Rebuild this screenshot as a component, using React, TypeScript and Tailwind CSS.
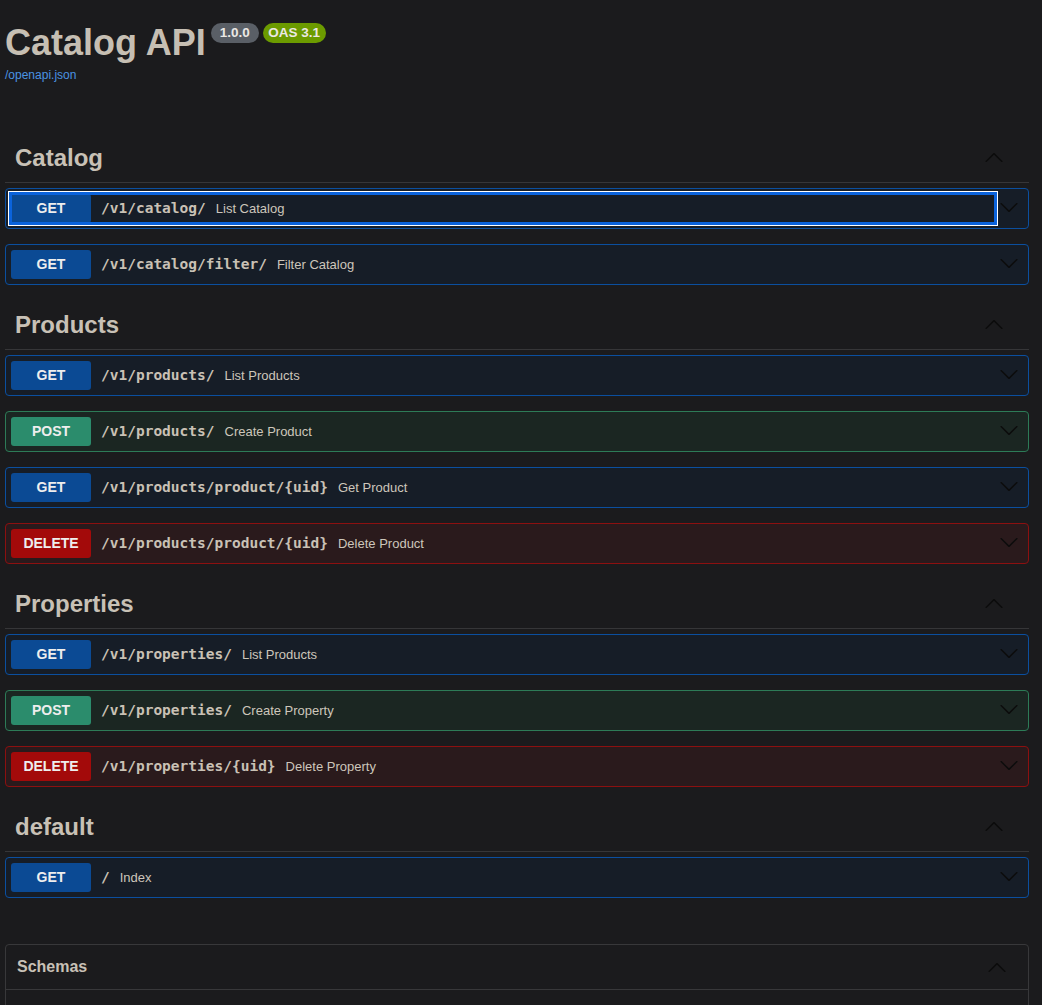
import React from "react";

type Method = "GET" | "POST" | "DELETE";

const methodStyle: Record<Method, { block: string; badge: string }> = {
  GET: { block: "border-[#0b4f9f] bg-[#161d27]", badge: "bg-[#0b4a94]" },
  POST: { block: "border-[#2d7b57] bg-[#1b2622]", badge: "bg-[#2b8c6c]" },
  DELETE: { block: "border-[#8c1010] bg-[#2a1a1c]", badge: "bg-[#a30a0a]" },
};

const sections: { name: string; ops: { m: Method; p: string; d: string; focus?: boolean }[] }[] = [
  {
    name: "Catalog",
    ops: [
      { m: "GET", p: "/v1/catalog/", d: "List Catalog", focus: true },
      { m: "GET", p: "/v1/catalog/filter/", d: "Filter Catalog" },
    ],
  },
  {
    name: "Products",
    ops: [
      { m: "GET", p: "/v1/products/", d: "List Products" },
      { m: "POST", p: "/v1/products/", d: "Create Product" },
      { m: "GET", p: "/v1/products/product/{uid}", d: "Get Product" },
      { m: "DELETE", p: "/v1/products/product/{uid}", d: "Delete Product" },
    ],
  },
  {
    name: "Properties",
    ops: [
      { m: "GET", p: "/v1/properties/", d: "List Products" },
      { m: "POST", p: "/v1/properties/", d: "Create Property" },
      { m: "DELETE", p: "/v1/properties/{uid}", d: "Delete Property" },
    ],
  },
  {
    name: "default",
    ops: [{ m: "GET", p: "/", d: "Index" }],
  },
];

function ArrowDown() {
  return (
    <svg width="20" height="20" viewBox="0 0 20 20" fill="#0c0c0c">
      <path d="M17.418 6.109c.272-.268.709-.268.979 0s.271.701 0 .969l-7.908 7.83c-.27.268-.707.268-.979 0l-7.908-7.83c-.27-.268-.27-.701 0-.969.271-.268.709-.268.979 0L10 13.25l7.418-7.141z" />
    </svg>
  );
}

function ArrowUp() {
  return (
    <svg width="20" height="20" viewBox="0 0 20 20" fill="#0c0c0c">
      <path d="M17.418 14.908c.272.268.709.268.979 0s.271-.701 0-.969l-7.908-7.83c-.27-.268-.707-.268-.979 0l-7.908 7.83c-.27.268-.27.701 0 .969.271.268.709.268.979 0L10 7.767l7.418 7.141z" />
    </svg>
  );
}

function Opblock({ m, p, d, focus }: { m: Method; p: string; d: string; focus?: boolean }) {
  const s = methodStyle[m];
  return (
    <div className={`relative mb-[15px] flex h-[41px] items-center rounded-[4px] border px-[5px] ${s.block}`}>
      <div className="flex flex-1 items-center">
        <span
          className={`flex h-[29px] w-[80px] items-center justify-center rounded-[3px] text-[14px] font-bold text-[#eeeeee] ${s.badge}`}
        >
          {m}
        </span>
        <span className="px-[10px] font-['DejaVu_Sans_Mono',monospace] text-[14.5px] font-bold text-[#c9c1b5]">
          {p}
        </span>
        <span className="text-[13px] text-[#cdc6bb]">{d}</span>
      </div>
      <span className="mr-[4px] mt-[-4px] flex">
        <ArrowDown />
      </span>
      {focus && (
        <span className="pointer-events-none absolute bottom-[3px] left-[3px] right-[31px] top-[3px] border-[3px] border-[#0b63dc] shadow-[0_0_0_1px_#ffffff]" />
      )}
    </div>
  );
}

export default function App() {
  return (
    <div className="min-h-screen bg-[#1b1b1d] pl-[5px] pr-[13px] font-['Liberation_Sans',Arial,sans-serif] text-[#c8c1b6]">
      <div className="h-[133px] pt-[22px]">
        <div className="flex items-start">
          <h1 className="text-[36px] font-bold leading-[41px] text-[#c6bfb3]">Catalog API</h1>
          <span className="ml-[5px] mt-[1px] flex h-[20px] w-[48px] items-center justify-center rounded-full bg-[#5a5f66] text-[13.5px] font-bold text-[#ebe8e4]">
            1.0.0
          </span>
          <span className="ml-[4px] mt-[1px] flex h-[20px] w-[63px] items-center justify-center rounded-full bg-[#6c9b00] text-[13.5px] font-bold text-[#ebe8e4]">
            OAS 3.1
          </span>
        </div>
        <a className="mt-[5px] block text-[12px] leading-[14px] text-[#4a93e2]">/openapi.json</a>
      </div>

      {sections.map((sec) => (
        <div key={sec.name}>
          <div className="mb-[5px] flex h-[50px] items-center justify-between border-b border-[#363638] pl-[10px] pr-[25px]">
            <h3 className="text-[24px] font-bold">{sec.name}</h3>
            <span className="mt-[-2px] flex">
              <ArrowUp />
            </span>
          </div>
          {sec.ops.map((op, i) => (
            <Opblock key={i} {...op} />
          ))}
        </div>
      ))}

      <div className="mt-[46px] rounded-[4px] border border-[#38383a]">
        <div className="mb-[5px] flex h-[45px] items-center justify-between border-b border-[#38383a] pl-[11px] pr-[21px]">
          <h4 className="text-[16px] font-bold">Schemas</h4>
          <span className="flex">
            <ArrowUp />
          </span>
        </div>
        <div className="h-[40px]" />
      </div>
    </div>
  );
}
